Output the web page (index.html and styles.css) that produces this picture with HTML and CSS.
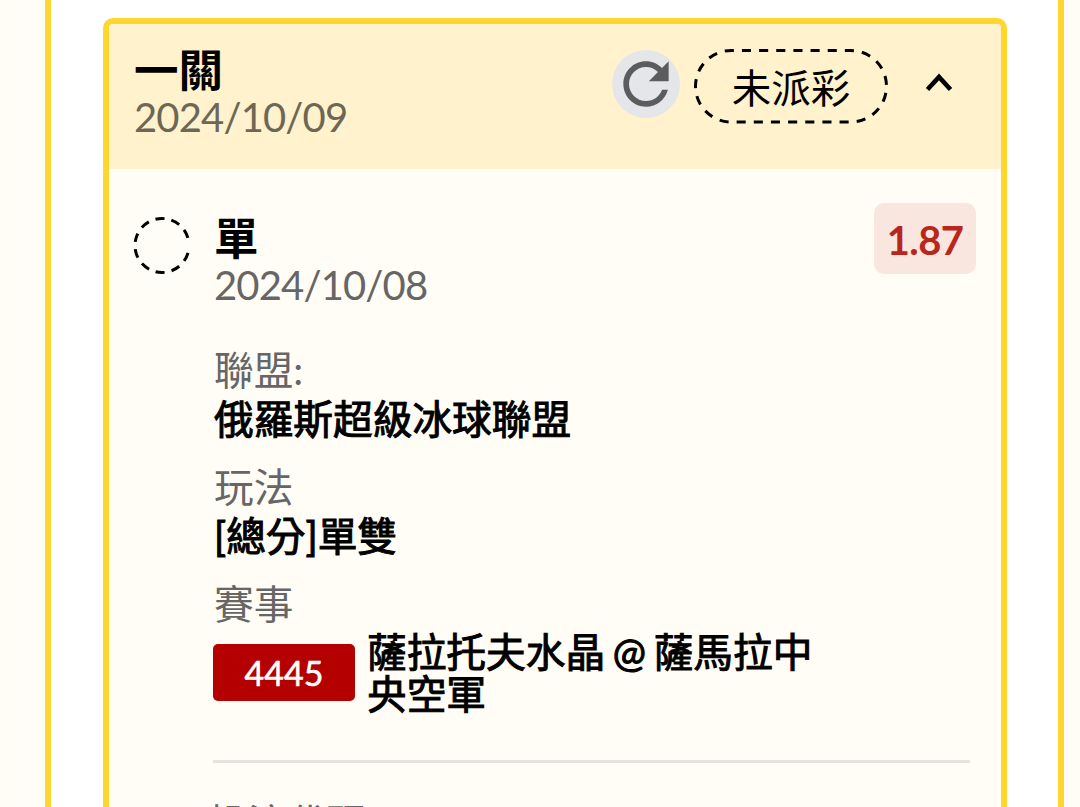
FILE: index.html
```html
<!DOCTYPE html>
<html lang="zh-Hant">
<head>
    <meta charset="UTF-8">
    <meta name="viewport" content="width=device-width, initial-scale=1.0">
    <title>投注紀錄</title>
    <link rel="stylesheet" href="styles.css">
</head>
<body>
    <div class="panel">
        <div class="ticket">
            <div class="ticket-header">
                <div class="ticket-name">
                    <h1>一關</h1>
                    <div class="date">2024/10/09</div>
                </div>
                <button class="refresh" type="button" aria-label="refresh">
                    <svg width="68" height="68" viewBox="0 0 24 24">
                        <path fill="#5b5c5e" d="M17.65 6.35C16.2 4.9 14.21 4 12 4c-4.42 0-7.99 3.58-7.99 8s3.57 8 7.99 8c3.73 0 6.84-2.55 7.73-6h-2.08c-.82 2.33-3.04 4-5.65 4-3.31 0-6-2.69-6-6s2.69-6 6-6c1.66 0 3.14.69 4.22 1.78L13 11h7V4l-2.35 2.35z"/>
                    </svg>
                </button>
                <div class="status">
                    <svg class="status-outline" width="194" height="75" viewBox="0 0 194 75">
                        <rect x="1.5" y="1.5" width="191" height="71.5" rx="35.75" pathLength="27" stroke-dasharray="0.53 0.47" stroke-dashoffset="0.378"/>
                    </svg>
                    <span>未派彩</span>
                </div>
                <svg class="chevron" width="28" height="20" viewBox="0 0 28 20">
                    <path d="M2.5 16.5L14 4l11.5 12.5" fill="none" stroke="#000" stroke-width="4.6"/>
                </svg>
            </div>

            <div class="bet">
                <svg class="bet-mark" width="58" height="58" viewBox="0 0 58 58">
                    <circle cx="29" cy="29.5" r="27" pathLength="360" transform="rotate(16 29 29.5)" stroke-dasharray="19 15.3 19 15.3 19 15.3 19 15.3 19 15.3 19 15.3 19 15.3 19 15.3 19 15.3 19 32.3"/>
                </svg>
                <div class="bet-content">
                    <div class="bet-top">
                        <div>
                            <h2>單</h2>
                            <div class="date">2024/10/08</div>
                        </div>
                        <div class="odds">1.87</div>
                    </div>
                    <dl>
                        <dt>聯盟:</dt>
                        <dd>俄羅斯超級冰球聯盟</dd>
                        <dt>玩法</dt>
                        <dd>[總分]單雙</dd>
                        <dt>賽事</dt>
                        <dd class="match">
                            <span class="match-no">4445</span>
                            <span class="match-teams">薩拉托夫水晶 @ 薩馬拉中央空軍</span>
                        </dd>
                    </dl>
                    <div class="bet-code">投注代碼</div>
                </div>
            </div>
        </div>
    </div>
</body>
</html>
```

FILE: styles.css
```css
* {
    box-sizing: border-box;
}

body, html {
    height: 100%;
    margin: 0;
    overflow: hidden;
    background: #fffdf5;
    font-family: Lato, "Noto Sans CJK TC", sans-serif;
    color: #000;
}

h1, h2, dl, dd {
    margin: 0;
}

.panel {
    height: 100%;
    margin: 0 16px 0 45px;
    padding: 18px 51px 0 51.5px;
    border: solid #ffd62e;
    border-width: 0 6px;
    background: #fff;
}

.ticket {
    height: 100%;
    border: 6px solid #ffd62e;
    border-bottom: none;
    border-radius: 10px 10px 0 0;
    background: #fffdf5;
    overflow: hidden;
}

.ticket-header {
    display: flex;
    align-items: flex-start;
    height: 145px;
    padding: 24px 48px 0 25.5px;
    background: #fff2cc;
}

.ticket-name {
    flex: 1;
}

h1, h2 {
    font-size: 44.5px;
    line-height: 44px;
    font-weight: 700;
}

.date {
    font-size: 40px;
    line-height: 50px;
    letter-spacing: -0.85px;
    color: #666;
}

.ticket-header .date {
    color: #6d6756;
}

.refresh {
    width: 68px;
    height: 68px;
    margin: 1.5px 14px 0 0;
    padding: 0;
    border: none;
    border-radius: 50%;
    background: #e4e6e9;
}

.refresh svg {
    display: block;
}

.status {
    position: relative;
    width: 194px;
    height: 75px;
    margin-top: 1px;
    font-size: 39.5px;
    line-height: 78px;
    text-align: center;
}

.status-outline {
    position: absolute;
    left: 0;
    top: 0;
}

.status-outline rect, .bet-mark circle {
    fill: none;
    stroke: #000;
    stroke-width: 3;
}

.chevron {
    margin: 25px 0 0 37px;
}

.bet {
    display: flex;
    align-items: flex-start;
    gap: 22px;
    padding: 34px 25px 0 24.5px;
}

.bet-mark {
    flex: none;
    margin-top: 13px;
}

.bet-content {
    flex: 1;
}

.bet-top {
    display: flex;
    justify-content: space-between;
    align-items: flex-start;
    padding-left: 1px;
}

h2 {
    margin-top: 13px;
}

.odds {
    width: 102px;
    height: 71px;
    border-radius: 10px;
    background: #f8e6df;
    color: #b9261c;
    font-size: 40px;
    font-weight: 700;
    letter-spacing: -0.6px;
    line-height: 74px;
    text-align: center;
}

dl {
    margin-right: 6px;
    padding: 35px 0 45px;
    border-bottom: 3px solid #e8e3dc;
    font-size: 39.7px;
}

dt {
    padding-left: 1px;
    line-height: 50px;
    color: #666;
}

/* between regular and bold */
dd {
    margin-bottom: 20px;
    padding-left: 1px;
    line-height: 47px;
    -webkit-text-stroke: 1px;
}

.match {
    display: flex;
    align-items: center;
    gap: 12px;
    margin: 0;
    padding: 1px 0 0;
    line-height: 42px;
}

.match-no {
    flex: none;
    width: 142px;
    height: 57px;
    border-radius: 5px;
    background: #b50000;
    color: #fff;
    font-size: 34px;
    line-height: 58px;
    text-align: center;
    -webkit-text-stroke: 0.6px;
}

.match-teams {
    width: 450px;
    padding-top: 1px;
    word-spacing: -2.5px;
}

.bet-code {
    height: 40px;
    margin-top: 35px;
    margin-left: -5px;
    font-size: 39.5px;
    line-height: 50px;
    color: #666;
}
```
